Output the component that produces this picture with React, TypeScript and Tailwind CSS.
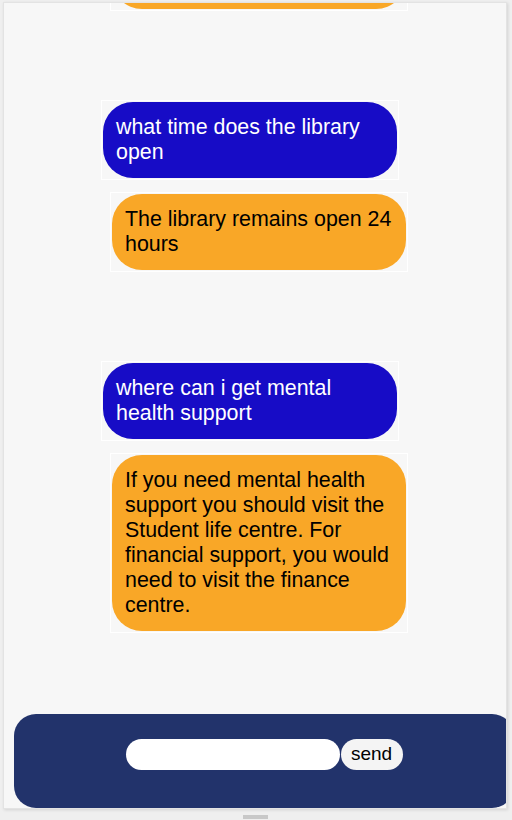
import { useState } from 'react';

type Message = { from: 'user' | 'bot'; text: string };

const messages: Message[] = [
  {
    from: 'bot',
    text: 'You can find the timetable on the student portal under the my studies tab, it is updated every week by the school office.',
  },
  { from: 'user', text: 'what time does the library open' },
  { from: 'bot', text: 'The library remains open 24 hours' },
  { from: 'user', text: 'where can i get mental health support' },
  {
    from: 'bot',
    text: 'If you need mental health support you should visit the Student life centre. For financial support, you would need to visit the finance centre.',
  },
];

const Bubble = ({ from, text, first }: Message & { first: boolean }) => {
  const isUser = from === 'user';
  return (
    <div
      className={
        isUser
          ? 'ml-[97px] mt-[89px] w-[298px] shrink-0 border border-white p-px'
          : first
            ? 'ml-[106px] w-[298px] shrink-0 border border-white p-px'
            : 'ml-[106px] mt-[12px] w-[298px] shrink-0 border border-white p-px'
      }
    >
      <div
        className={
          isUser
            ? 'rounded-[30px] bg-[#170cc6] px-[13px] py-[13px] text-[21.4px] leading-[25px] text-white'
            : 'rounded-[30px] bg-[#f9a727] px-[13px] py-[13px] text-[21.4px] leading-[25px] text-black'
        }
      >
        {text}
      </div>
    </div>
  );
};

export default function App() {
  const [value, setValue] = useState('');

  return (
    <div
      className="flex min-h-[820px] flex-col bg-[#efefef]"
      style={{ fontFamily: '"Liberation Sans", Arial, sans-serif' }}
    >
      <div className="ml-[3px] mt-[2px] flex h-[807px] w-[504px] flex-col overflow-hidden border border-[#e3e3e3] bg-[#f7f7f7] shadow-[1px_1px_3px_rgba(0,0,0,0.12)]">
        <div className="flex min-h-0 flex-1 flex-col justify-end overflow-hidden pb-[81px]">
          {messages.map((m, i) => (
            <Bubble key={i} {...m} first={i === 0} />
          ))}
        </div>
        <div className="ml-[10px] flex h-[94px] w-[500px] shrink-0 justify-center rounded-[22px] bg-[#22336b] pt-[25px]">
          <div className="flex h-[31px] items-center">
            <input
              value={value}
              onChange={(e) => setValue(e.target.value)}
              className="h-[31px] w-[214px] rounded-full bg-white px-3 text-[18px] text-black outline-none"
            />
            <button className="ml-px h-[31px] w-[62px] rounded-full bg-[#f4f4f4] text-[19px] text-black">
              send
            </button>
          </div>
        </div>
      </div>
      <div className="ml-[243px] mt-[6px] h-[4px] w-[25px] bg-[#c8c8c8]" />
    </div>
  );
}
